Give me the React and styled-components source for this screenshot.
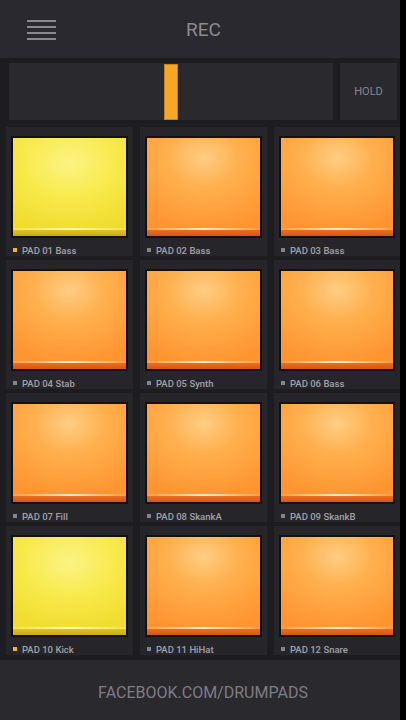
import React from 'react';
import styled, { createGlobalStyle } from 'styled-components';

const GlobalStyle = createGlobalStyle`
    html, body {
	margin: 0;
	padding: 0;
	background: #000;
    }
    body {
	font-family: Roboto, "Liberation Sans", sans-serif;
    }
`;

const Screen = styled.div`
    display: flex;
    width: 406px;
    height: 720px;
    background: #000;
`;

const Main = styled.div`
    width: 400px;
    display: flex;
    flex-direction: column;
    background: #1d1c21;
`;

const Header = styled.header`
    height: 58px;
    display: grid;
    grid-template-columns: 1fr auto 1fr;
    align-items: center;
    padding: 0 0 0 27px;
    background: #2a292f;
`;

const Burger = styled.div`
    display: flex;
    flex-direction: column;
    gap: 4px;
    width: 29px;
    margin-top: 2px;
    span {
	display: block;
	height: 2px;
	background: #8a898f;
    }
`;

const Title = styled.h1`
    margin: 0;
    padding-left: 6px;
    font-size: 19px;
    font-weight: 400;
    color: #8b8a90;
    transform: translateX(-13px);
`;

const Transport = styled.div`
    display: flex;
    gap: 7px;
    height: 57px;
    margin-top: 5px;
    padding: 0 3px 0 9px;
`;

// the playhead lies over the track panel
const Track = styled.div`
    position: relative;
    flex: 1;
    background: #2a292e;
`;

const Playhead = styled.div`
    position: absolute;
    top: 1px;
    bottom: 0;
    width: 14px;
    box-sizing: border-box;
    background: #f5a727;
    border: 1px solid #c98418;
`;

const Hold = styled.button`
    width: 57px;
    border: none;
    background: #2a292e;
    color: #88878d;
    font-family: Roboto, "Liberation Sans", sans-serif;
    font-size: 11px;
    padding: 0;
`;

const Grid = styled.div`
    display: grid;
    grid-template-columns: 127px 127px 126px;
    column-gap: 7px;
    row-gap: 4px;
    margin-top: 7px;
    padding-left: 6px;
`;

const Cell = styled.div`
    height: 129px;
    box-sizing: border-box;
    padding: 9px 5px 0 5px;
    background: #26252a;
    display: flex;
    flex-direction: column;
`;

const padSkins = {
    yellow: `
	linear-gradient(#e1c421, #c9a81a) left 0 bottom 0 / 100% 6px no-repeat,
	linear-gradient(90deg, rgba(255,250,190,0.2), rgba(255,250,190,0.95) 50%, rgba(255,250,190,0.2)) left 0 bottom 6px / 100% 2px no-repeat,
	radial-gradient(ellipse 80% 70% at 50% 25%, #fcf385 0%, #f8ea4c 50%, #f1dd30 100%)
    `,
    orange: `
	linear-gradient(#ea6e1e, #d65618) left 0 bottom 0 / 100% 6px no-repeat,
	linear-gradient(90deg, rgba(255,225,180,0.1), rgba(255,240,215,0.95) 50%, rgba(255,225,180,0.1)) left 0 bottom 6px / 100% 2px no-repeat,
	radial-gradient(ellipse 80% 75% at 50% 20%, #ffcd84 0%, #ffb04e 40%, #ff9530 100%)
    `
};

const Pad = styled.div`
    flex: 0 0 102px;
    box-sizing: border-box;
    border: 2px solid #141211;
    background: ${props => padSkins[props.skin]};
`;

const Label = styled.div`
    display: flex;
    align-items: center;
    gap: 5px;
    height: 19px;
    box-sizing: border-box;
    padding: 6px 0 0 2px;
    font-size: 9.5px;
    font-weight: 500;
    color: #a2a1a7;
    white-space: nowrap;
`;

const Dot = styled.span`
    width: 4px;
    height: 4px;
    background: ${props => props.active ? '#f2b233' : '#85848a'};
`;

const Footer = styled.footer`
    margin-top: auto;
    height: 60px;
    display: flex;
    align-items: center;
    justify-content: center;
    padding: 4px 0 0 6px;
    box-sizing: border-box;
    background: #2a292e;
    color: #7e7d85;
    font-size: 16px;
`;

const pads = [
    { name: 'PAD 01 Bass', active: true },
    { name: 'PAD 02 Bass' },
    { name: 'PAD 03 Bass' },
    { name: 'PAD 04 Stab' },
    { name: 'PAD 05 Synth' },
    { name: 'PAD 06 Bass' },
    { name: 'PAD 07 Fill' },
    { name: 'PAD 08 SkankA' },
    { name: 'PAD 09 SkankB' },
    { name: 'PAD 10 Kick', active: true },
    { name: 'PAD 11 HiHat' },
    { name: 'PAD 12 Snare' }
];

const App = () => {
    const playPosition = 155;
    return (
	<Screen>
	    <GlobalStyle />
	    <Main>
		<Header>
		    <Burger>
			<span /><span /><span /><span />
		    </Burger>
		    <Title>REC</Title>
		    <div />
		</Header>
		<Transport>
		    <Track>
			<Playhead style={{ left: playPosition }} />
		    </Track>
		    <Hold>HOLD</Hold>
		</Transport>
		<Grid>
		    {pads.map(pad => (
			<Cell key={pad.name}>
			    <Pad skin={pad.active ? 'yellow' : 'orange'} />
			    <Label>
				<Dot active={pad.active} />
				{pad.name}
			    </Label>
			</Cell>
		    ))}
		</Grid>
		<Footer>FACEBOOK.COM/DRUMPADS</Footer>
	    </Main>
	</Screen>
    );
};

export default App;
